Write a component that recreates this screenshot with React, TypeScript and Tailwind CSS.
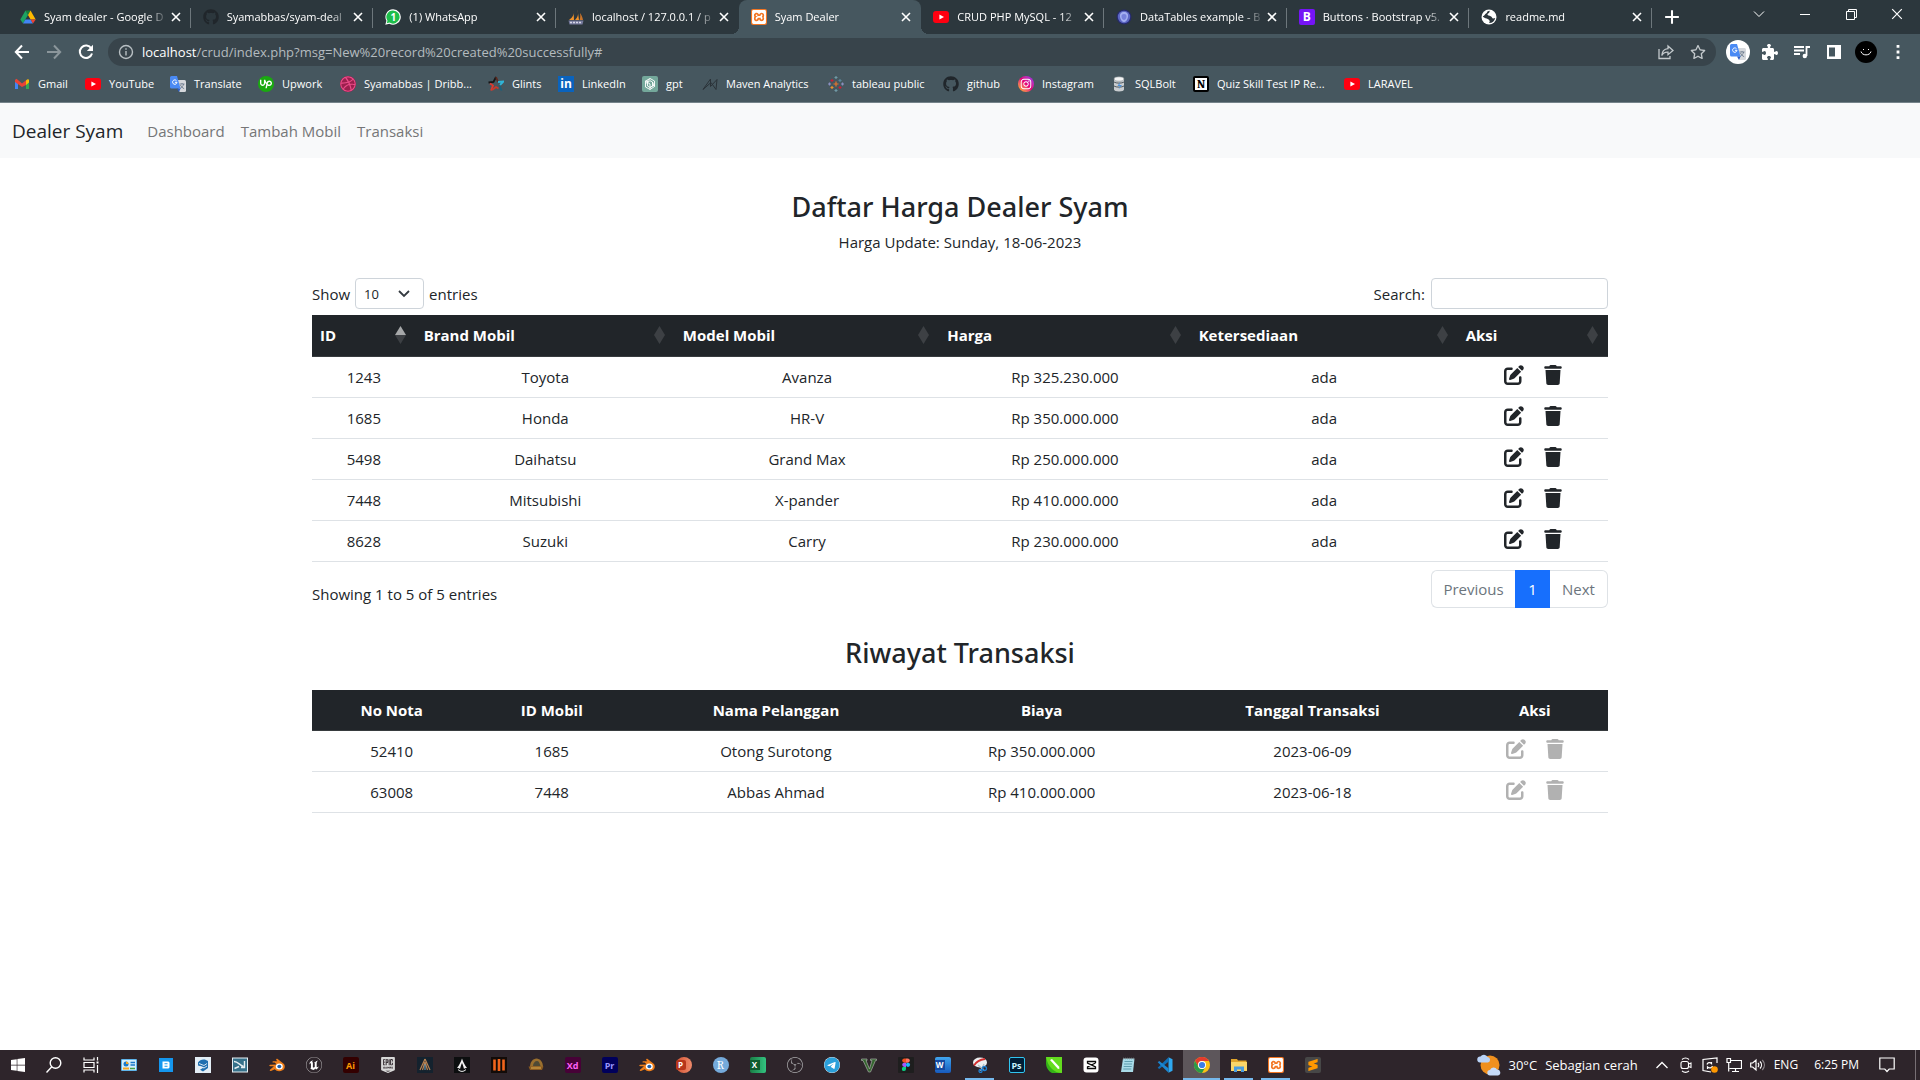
import type { ReactNode } from "react";
import { FaGithub, FaPenToSquare, FaTrash, FaDribbble, FaInstagram, FaWindows, FaTelegram, FaRegStar, FaPuzzlePiece } from "react-icons/fa6";
import { SiUnrealengine, SiEpicgames, SiObsstudio, SiSublimetext, SiXampp, SiUpwork } from "react-icons/si";

/* ---------- shared glyphs ---------- */

function Tile({ className, children }: { className: string; children?: ReactNode }) {
  return <span className={"flex size-4 shrink-0 items-center justify-center leading-none " + className}>{children}</span>;
}

function YouTube() {
  return (
    <svg viewBox="0 0 16 16" className="size-4 shrink-0">
      <rect y="2" width="16" height="12" rx="3" fill="#ff0010" />
      <path d="M6.400 5.400v5.200L11 8z" fill="#fff" />
    </svg>
  );
}

function GDrive() {
  return (
    <svg viewBox="0 0 16 16" className="size-4 shrink-0">
      <path d="M5.500 1.500h5L8 6z" fill="#188038" />
      <path d="M5.500 1.500 8 6 3 14.500.3 10.400z" fill="#1ea362" />
      <path d="M10.500 1.500 15.700 10.400H10.600L8 6z" fill="#ffba00" />
      <path d="M5.400 10.400h5.200L13 14.500H3z" fill="#4285f4" />
      <path d="M10.600 10.400h5.100L13 14.500z" fill="#ea4335" />
    </svg>
  );
}

function WhatsApp() {
  return (
    <span className="relative flex size-4 shrink-0 items-center justify-center">
      <svg viewBox="0 0 16 16" className="absolute size-4">
        <path d="M8 .3a7.700 7.700 0 0 0-6.600 11.500L.3 15.700l4-1A7.700 7.700 0 1 0 8 .3z" fill="#fff" />
        <path d="M8 1.400a6.600 6.600 0 0 0-5.500 10.300l-.8 2.600 2.800-.7A6.600 6.600 0 1 0 8 1.400z" fill="#1ebe4b" />
      </svg>
      <span className="relative text-[10px] leading-none font-bold text-white">1</span>
    </span>
  );
}

function PhpMyAdmin() {
  return (
    <svg viewBox="0 0 16 16" className="size-4 shrink-0">
      <path d="M5.500 1.500C6 5 5.500 8 1 11h5z" fill="#f0932b" />
      <path d="M9.500.5C10.500 4 10.500 8 7 11h4z" fill="#f0932b" />
      <path d="M12 4c.5 3 .3 5-.5 7H15c-.5-3-1.500-5-3-7z" fill="#c9742a" />
      <path d="M.5 11.500h15L14.500 15.500h-13z" fill="#767a9c" />
      <path d="M2 13.500h2m1 0h2m1 0h2m1 0h2" stroke="#d5d7e6" strokeWidth="1.500" />
    </svg>
  );
}

function DataTablesIcon() {
  return (
    <svg viewBox="0 0 16 16" className="size-4 shrink-0">
      <circle cx="8" cy="8" r="7.500" fill="#252a6b" />
      <circle cx="8" cy="8" r="6.200" fill="#5d67c4" />
      <path d="M8 3c3 0 4.500 2 4 5s-2.500 5-4 5-3.500-2-4-5 1-5 4-5z" fill="#a3aef0" />
      <path d="M8 5c1.800 0 2.800 1.200 2.500 3S9 11 8 11 5.800 9.800 5.500 8 6.200 5 8 5z" fill="#7781dc" />
    </svg>
  );
}

function Globe() {
  return (
    <svg viewBox="0 0 16 16" className="size-4 shrink-0">
      <circle cx="8" cy="8" r="7.500" fill="#fff" />
      <path d="M9 1.800c-1 1-.2 2-1.500 2.500S6 6 7.500 6.500s3 .5 3.500 2 1.500 1 3.200.5A6.300 6.300 0 0 1 8 14c.8-1.200 1-1.800.3-2.800S6 9.500 4.500 9.200 2 8 1.800 7c.8-.2 1.500-.3 2-1.300S6 4.500 6 3.500 7.500 2 9 1.800z" fill="#2c363c" />
    </svg>
  );
}

function Translate({ className }: { className: string }) {
  return (
    <svg viewBox="0 0 16 16" className={"shrink-0 " + className}>
      <path d="M6 4h8.500A1.500 1.500 0 0 1 16 5.500v9a1.500 1.500 0 0 1-1.500 1.500H9.500z" fill="#d5d8dc" />
      <path d="M9.500 8h5M12 7v1m1.700 0c-.5 2-2 3.500-3.700 4.500M10.500 9c.5 1.500 2 3 3.700 3.700" stroke="#6b7a8c" strokeWidth=".9" fill="none" />
      <path d="M1.500 0H7l3.500 12.500h-9A1.500 1.500 0 0 1 0 11V1.500A1.500 1.500 0 0 1 1.500 0z" fill="#4a8af4" />
      <path d="M7 12.500h3.500L9 16z" fill="#2a5dc9" />
      <path d="M6.500 4.700A2.200 2.200 0 1 0 7 6.300H4.900" stroke="#fff" strokeWidth="1" fill="none" />
    </svg>
  );
}

function Blender() {
  return (
    <svg viewBox="0 0 16 16" className="size-4 shrink-0">
      <path d="M8.300 1.800 15 7c1.500 2.500.8 5-1.500 6.300-2.500 1.400-6 1.200-7.700-1L2 14c-1.300.3-1.700-.8-.8-1.500L5 9.300H1.200C0 9.200 0 8 1.200 7.700l6.600-.2L5.600 5.600H4.200c-1-.1-1-1.300 0-1.400h4L7.300 3c-.5-.8.2-1.700 1-1.200z" fill="#ef7f1a" />
      <ellipse cx="10.300" cy="9.500" rx="3.500" ry="3" fill="#fff" />
      <ellipse cx="10.300" cy="9.500" rx="2" ry="1.800" fill="#1f5fa8" />
    </svg>
  );
}

function Close({ className }: { className: string }) {
  return (
    <svg viewBox="0 0 10 10" className={className} fill="none" stroke="currentColor">
      <path d="m1 1 8 8M9 1 1 9" />
    </svg>
  );
}

/* ---------- browser tabs ---------- */

type Tab = { title: string; icon: ReactNode; active?: boolean; bare?: boolean };

const tabs: Tab[] = [
  { title: "Syam dealer - Google D", icon: <GDrive /> },
  { title: "Syamabbas/syam-deal", icon: <FaGithub className="size-4 shrink-0 text-[#20262b]" /> },
  { title: "(1) WhatsApp", icon: <WhatsApp /> },
  { title: "localhost / 127.0.0.1 / p", icon: <PhpMyAdmin />, bare: true },
  { title: "Syam Dealer", icon: <Tile className="rounded-xs bg-[#f37623] text-white"><SiXampp className="size-3.5" /></Tile>, active: true, bare: true },
  { title: "CRUD PHP MySQL - 12", icon: <YouTube /> },
  { title: "DataTables example - B", icon: <DataTablesIcon /> },
  { title: "Buttons · Bootstrap v5.", icon: <Tile className="rounded-xs bg-[#7514f6] text-xs font-bold text-white">B</Tile> },
  { title: "readme.md", icon: <Globe /> },
];

function TabStrip() {
  return (
    <div className="flex h-[34px] items-stretch bg-[#2c373d] pl-2">
      <div className="flex w-[1644px] min-w-0">
        {tabs.map((t) => (
          <div
            key={t.title}
            className={
              "relative flex min-w-0 flex-1 items-center pr-[7px] pl-3 text-white " + (t.active ? "rounded-t-lg bg-[#46575f]" : "")
            }
          >
            {t.active && (
              <>
                <span className="absolute bottom-0 -left-2 size-2 bg-[radial-gradient(circle_at_0_0,transparent_8px,#46575f_8px)]" />
                <span className="absolute -right-2 bottom-0 size-2 bg-[radial-gradient(circle_at_100%_0,transparent_8px,#46575f_8px)]" />
              </>
            )}
            {t.icon}
            <span className="ml-2 min-w-0 flex-1 overflow-hidden whitespace-nowrap [mask-image:linear-gradient(to_right,black_calc(100%_-_20px),transparent)]">
              {t.title}
            </span>
            <button type="button" aria-label={"Close " + t.title} className="flex size-4 shrink-0 items-center justify-center">
              <Close className="size-2.5 stroke-[1.600]" />
            </button>
            {!t.bare && <span className="absolute top-2 right-0 h-5 w-px bg-[#6d777c]" />}
          </div>
        ))}
      </div>
      <button type="button" aria-label="New tab" className="ml-3 flex items-center text-white">
        <svg viewBox="0 0 14 14" className="size-4" stroke="currentColor" strokeWidth="1.800">
          <path d="M7 1v12M1 7h12" />
        </svg>
      </button>
      <div className="ml-auto flex items-stretch pb-1.5 text-white">
        <button type="button" aria-label="Search tabs" className="flex w-[46px] items-center justify-center">
          <svg viewBox="0 0 12 12" className="size-3" fill="none" stroke="currentColor"><path d="m1 3.500 5 5 5-5" /></svg>
        </button>
        <button type="button" aria-label="Minimize" className="flex w-[46px] items-center justify-center">
          <svg viewBox="0 0 10 10" className="size-2.5" stroke="currentColor"><path d="M0 5.500h10" /></svg>
        </button>
        <button type="button" aria-label="Restore" className="flex w-[46px] items-center justify-center">
          <svg viewBox="0 0 11 11" className="size-[11px]" fill="none" stroke="currentColor"><path d="M.5 2.500h8v8h-8zM2.500 2.500v-2h8v8h-2" /></svg>
        </button>
        <button type="button" aria-label="Close window" className="flex w-[46px] items-center justify-center">
          <Close className="size-3" />
        </button>
      </div>
    </div>
  );
}

/* ---------- toolbar ---------- */

function Toolbar() {
  return (
    <div className="flex h-9 items-center bg-[#46575f] pr-2.5 pl-3.5 text-white">
      <div className="flex items-center gap-4">
        <button type="button" aria-label="Back">
          <svg viewBox="0 0 16 16" className="size-4" fill="none" stroke="currentColor" strokeWidth="2"><path d="M15 8H2m6-6.500L1.800 8 8 14.500" /></svg>
        </button>
        <button type="button" aria-label="Forward" className="text-[#8b969b]">
          <svg viewBox="0 0 16 16" className="size-4" fill="none" stroke="currentColor" strokeWidth="2"><path d="M1 8h13M8 1.500 14.200 8 8 14.500" /></svg>
        </button>
        <button type="button" aria-label="Reload">
          <svg viewBox="0 0 16 16" className="size-4" fill="none" stroke="currentColor" strokeWidth="2">
            <path d="M13.300 4.500A6.200 6.200 0 1 0 14 9.500" />
            <path d="M15 .8V7H8.800z" fill="currentColor" stroke="none" />
          </svg>
        </button>
      </div>
      <div className="ml-3.5 flex h-7 min-w-0 flex-1 items-center gap-2 rounded-full bg-[#38444b] px-2.5">
        <svg viewBox="0 0 16 16" className="size-4 text-[#b8bfc3]" fill="none" stroke="currentColor" strokeWidth="1.400">
          <circle cx="8" cy="8" r="6.500" />
          <path d="M8 7v4.500M8 4.300v1.500" />
        </svg>
        <p className="min-w-0 flex-1 truncate text-[13px] text-[#b4bbbf]">
          <span className="text-white">localhost</span>/crud/index.php?msg=New%20record%20created%20successfully#
        </p>
        <button type="button" aria-label="Share" className="text-[#c3c9cc]">
          <svg viewBox="0 0 16 16" className="size-4" fill="none" stroke="currentColor" strokeWidth="1.300">
            <path d="M1 5v9.500h11V12" />
            <path d="M10 2l5 4.500-5 4.200V8.200C7 8 5 9 3.800 11.500 4 7.500 6 5 10 4.600z" />
          </svg>
        </button>
        <button type="button" aria-label="Bookmark this page" className="ml-2 text-[#c3c9cc]"><FaRegStar className="size-4" /></button>
      </div>
      <div className="ml-2.5 flex items-center gap-2">
        <button type="button" aria-label="Google Translate" className="flex size-6 items-center justify-center rounded-full bg-white"><Translate className="size-4" /></button>
        <button type="button" aria-label="Extensions" className="flex w-6 justify-center"><FaPuzzlePiece className="size-4" /></button>
        <button type="button" aria-label="Media controls" className="flex w-6 justify-center">
          <svg viewBox="0 0 16 16" className="size-4" fill="none" stroke="currentColor" strokeWidth="1.800">
            <path d="M0 3h10M0 6.500h10M0 10h6" />
            <path d="M16 3h-3.500v9" />
            <circle cx="10.800" cy="12" r="2.200" fill="currentColor" stroke="none" />
          </svg>
        </button>
        <button type="button" aria-label="Side panel" className="flex w-6 justify-center">
          <svg viewBox="0 0 16 16" className="size-4"><path fillRule="evenodd" d="M1 1h14v14H1zM3 3.500v9h6v-9z" fill="currentColor" /></svg>
        </button>
        <button type="button" aria-label="Profile" className="mx-px flex size-[22px] items-center justify-center rounded-full bg-black">
          <svg viewBox="0 0 12 8" className="w-3" fill="none" stroke="currentColor"><path d="M1 3.500c1 4.500 9 4.500 10 0M3.500 1v1M8.500 1v1" /></svg>
        </button>
        <button type="button" aria-label="Menu" className="flex w-6 justify-center">
          <svg viewBox="0 0 4 14" className="h-3.5"><path d="M.6 0h2.800v2.800H.6zM.6 5.600h2.800v2.800H.6zM.6 11.200h2.800V14H.6z" fill="currentColor" /></svg>
        </button>
      </div>
    </div>
  );
}

/* ---------- bookmarks ---------- */

const bookmarks: { label: string; width: string; icon: ReactNode }[] = [
  {
    label: "Gmail",
    width: "w-[71px]",
    icon: (
      <svg viewBox="0 0 16 16" className="size-4 shrink-0">
        <path d="M1 3.500v9.500h3V7z" fill="#4285f4" />
        <path d="M15 3.500v9.500h-3V7z" fill="#34a853" />
        <path d="m1 4 1.500-1.200L8 7.500l5-4L12 9 8 11 1 6z" fill="#ea4335" />
        <path d="M12 4.500 14 3l1 1v2.500L12 9z" fill="#fbbc04" />
      </svg>
    ),
  },
  { label: "YouTube", width: "w-[85px]", icon: <YouTube /> },
  { label: "Translate", width: "w-[88px]", icon: <Translate className="size-4" /> },
  { label: "Upwork", width: "w-[82px]", icon: <Tile className="rounded-full bg-[#1aa910] text-white"><SiUpwork className="size-3" /></Tile> },
  { label: "Syamabbas | Dribb...", width: "w-[148px]", icon: <FaDribbble className="size-4 shrink-0 rounded-full bg-[#9c1f4d] text-[#ea4c89]" /> },
  {
    label: "Glints",
    width: "w-[70px]",
    icon: (
      <svg viewBox="0 0 16 16" className="size-4 shrink-0" fill="none" strokeWidth="1.800">
        <path d="M.5 6.500 5.500 6 8 1" stroke="#161616" />
        <path d="M8 1 10 6" stroke="#5c2a20" />
        <path d="m10 6 5.500-.5L12 9" stroke="#2fb5d8" />
        <path d="m11.500 9.500 2 5" stroke="#17627e" />
        <path d="M2 7.500 5 9.500l-2 5" stroke="#e0392e" />
        <path d="m4 14 4-3 2.500 1.500" stroke="#c93a2b" />
      </svg>
    ),
  },
  { label: "LinkedIn", width: "w-[84px]", icon: <Tile className="bg-[#0a63bd] text-[12px] font-bold text-white">in</Tile> },
  {
    label: "gpt",
    width: "w-[60px]",
    icon: (
      <svg viewBox="0 0 16 16" className="size-4 shrink-0" fill="none" stroke="#fff" strokeWidth=".9">
        <rect width="16" height="16" rx="2" fill="#74a89b" stroke="none" />
        <path d="M8 2.500 12.500 5v5.500L8 13.500 3.500 11V5z" />
        <path d="M8 2.500 5.500 5v5L8 11.500 12.500 9M3.500 5l4.500 3v5.500M12.500 10.500 10.500 6 8 4.700 3.500 7.500M10.500 6v4L8 11.500" />
      </svg>
    ),
  },
  {
    label: "Maven Analytics",
    width: "w-[126px]",
    icon: (
      <svg viewBox="0 0 16 16" className="size-4 shrink-0" fill="none" stroke="#2a3238" strokeWidth="1">
        <path d="M1 13.500 8.500 3v7.500L15 3.500 14 13.500 9 6.500 1 13.500" />
      </svg>
    ),
  },
  {
    label: "tableau public",
    width: "w-[115px]",
    icon: (
      <svg viewBox="0 0 16 16" className="size-4 shrink-0" fill="none" strokeWidth="1.200">
        <path d="M8 5.500v5M5.500 8h5" stroke="#e8762c" />
        <path d="M4 3v3M2.500 4.500h3M12 10v3M10.500 11.500h3" stroke="#c72035" />
        <path d="M12 3v3M10.500 4.500h3" stroke="#59879b" />
        <path d="M4 10v3M2.500 11.500h3" stroke="#eb912c" />
        <path d="M8 0v3M6.500 1.500h3M8 13v3M6.500 14.500h3" stroke="#7099a6" />
        <path d="M1.500 6.500v3M0 8h3M14.500 6.500v3M13 8h3" stroke="#8a8fc0" />
      </svg>
    ),
  },
  { label: "github", width: "w-[75px]", icon: <FaGithub className="size-4 shrink-0 text-[#20262b]" /> },
  { label: "Instagram", width: "w-[93px]", icon: <Tile className="rounded-full bg-linear-to-tr from-amber-400 via-pink-600 to-purple-600 text-white"><FaInstagram className="size-3" /></Tile> },
  {
    label: "SQLBolt",
    width: "w-[82px]",
    icon: (
      <svg viewBox="0 0 16 16" className="size-4 shrink-0">
        <path d="M3 3.500h10v10c0 1-2 2-5 2s-5-1-5-2z" fill="#c9cdd0" />
        <path d="M3 6c2 1.500 8 1.500 10 0M3 10c2 1.500 8 1.500 10 0" stroke="#50585d" fill="none" />
        <ellipse cx="8" cy="3" rx="5" ry="2.200" fill="#f4f5f5" stroke="#7d868b" strokeWidth=".6" />
        <path d="M9 6 6.500 10H9l-1.500 3.500L11 9H8.500z" fill="#4a90d9" />
      </svg>
    ),
  },
  {
    label: "Quiz Skill Test IP Re...",
    width: "w-[151px]",
    icon: <Tile className="rounded-xs border-2 border-black bg-white font-serif text-xs font-bold text-black">N</Tile>,
  },
  { label: "LARAVEL", width: "w-[85px]", icon: <YouTube /> },
];

function Bookmarks() {
  return (
    <nav aria-label="Bookmarks" className="flex h-[33px] items-center border-b border-[#75838a] bg-[#46575f] pb-1 pl-3.5 text-white">
      {bookmarks.map((b) => (
        <a key={b.label} href="#" className={"flex shrink-0 items-center gap-2 whitespace-nowrap " + b.width}>
          {b.icon}
          {b.label}
        </a>
      ))}
    </nav>
  );
}

/* ---------- page ---------- */

function Actions({ muted, name }: { muted?: boolean; name: string }) {
  return (
    <div className={"flex items-center justify-center gap-5 " + (muted ? "text-[#b1b1b1]" : "text-[#212529]")}>
      <a href="#" aria-label={"Edit " + name}><FaPenToSquare className="size-5" /></a>
      <a href="#" aria-label={"Hapus " + name}><FaTrash className="h-5 w-[18px]" /></a>
    </div>
  );
}

function SortMark({ asc }: { asc?: boolean }) {
  return (
    <svg viewBox="0 0 11 18" className="h-[18px] w-[11px] shrink-0">
      <path d="M5.500 0 11 9H0z" fill={asc ? "#a6a8a9" : "#3d4044"} />
      <path d="M0 9h11l-5.500 9z" fill="#3d4044" />
    </svg>
  );
}

const carColumns = [
  { label: "ID", width: "w-[8%]" },
  { label: "Brand Mobil", width: "w-[20%]" },
  { label: "Model Mobil", width: "w-[20.4%]" },
  { label: "Harga", width: "w-[19.4%]" },
  { label: "Ketersediaan", width: "w-[20.6%]" },
  { label: "Aksi", width: "w-[11.6%]" },
];

const cars = [
  ["1243", "Toyota", "Avanza", "Rp 325.230.000", "ada"],
  ["1685", "Honda", "HR-V", "Rp 350.000.000", "ada"],
  ["5498", "Daihatsu", "Grand Max", "Rp 250.000.000", "ada"],
  ["7448", "Mitsubishi", "X-pander", "Rp 410.000.000", "ada"],
  ["8628", "Suzuki", "Carry", "Rp 230.000.000", "ada"],
];

const saleColumns = [
  { label: "No Nota", width: "w-[12.3%]" },
  { label: "ID Mobil", width: "w-[12.4%]" },
  { label: "Nama Pelanggan", width: "w-[22.2%]" },
  { label: "Biaya", width: "w-[18.8%]" },
  { label: "Tanggal Transaksi", width: "w-[23%]" },
  { label: "Aksi", width: "w-[11.3%]" },
];

const sales = [
  ["52410", "1685", "Otong Surotong", "Rp 350.000.000", "2023-06-09"],
  ["63008", "7448", "Abbas Ahmad", "Rp 410.000.000", "2023-06-18"],
];

function Rows({ rows, muted }: { rows: string[][]; muted?: boolean }) {
  return (
    <tbody>
      {rows.map((r) => (
        <tr key={r[0]} className="h-[41px] border-b border-[#dee2e6] text-center">
          {r.map((c, i) => (
            <td key={i}>{c}</td>
          ))}
          <td className="pb-1"><Actions muted={muted} name={r[0]} /></td>
        </tr>
      ))}
    </tbody>
  );
}

function Page() {
  return (
    <div className="flex-1 bg-white text-[15px] leading-6 text-[#212529]">
      <nav className="flex h-[55px] items-center bg-[#f8f9fa] px-3">
        <a href="#" className="mr-6 text-[19px]">Dealer Syam</a>
        <div className="flex gap-4 text-[#757677]">
          <a href="#">Dashboard</a>
          <a href="#">Tambah Mobil</a>
          <a href="#">Transaksi</a>
        </div>
      </nav>

      <main className="mx-auto max-w-[1320px] px-3 pt-8">
        <h1 className="text-center font-['Noto_Sans','Open_Sans',sans-serif] text-[27px] leading-[34px] font-medium">Daftar Harga Dealer Syam</h1>
        <p className="mt-1.5 text-center">Harga Update: Sunday, 18-06-2023</p>

        <div className="mt-6 flex items-center justify-between">
          <label className="flex items-center gap-[5px]">
            Show
            <span className="relative flex">
              <select defaultValue="10" className="h-[31px] w-[69px] appearance-none rounded-sm border border-[#ced4da] bg-white pl-2 text-[13px]">
                <option>10</option>
                <option>25</option>
                <option>50</option>
                <option>100</option>
              </select>
              <svg viewBox="0 0 12 8" className="pointer-events-none absolute top-3 right-3.5 w-3" fill="none" stroke="#343a40" strokeWidth="1.800">
                <path d="m1 1 5 5 5-5" />
              </svg>
            </span>
            entries
          </label>
          <label className="flex items-center gap-1.5">
            Search:
            <input type="search" className="h-[31px] w-[177px] rounded-sm border border-[#ced4da] bg-white px-2" />
          </label>
        </div>

        <table className="mt-1.5 w-full table-fixed border-collapse">
          <thead className="bg-[#212529] text-white">
            <tr className="h-[41px] border-b border-[#373b3e] text-left">
              {carColumns.map((c, i) => (
                <th key={c.label} scope="col" className={"pr-2.5 pl-2 font-bold " + c.width}>
                  <span className="flex items-center justify-between">
                    {c.label}
                    <SortMark asc={i === 0} />
                  </span>
                </th>
              ))}
            </tr>
          </thead>
          <Rows rows={cars} />
        </table>

        <div className="mt-2 flex items-start justify-between">
          <p className="pt-3">Showing 1 to 5 of 5 entries</p>
          <div className="flex h-[38px] text-[#6c757d]">
            <button type="button" className="w-[84px] rounded-l-md border border-r-0 border-[#dee2e6]">Previous</button>
            <button type="button" className="w-[35px] bg-[#176ffd] text-white">1</button>
            <button type="button" className="w-[58px] rounded-r-md border border-l-0 border-[#dee2e6]">Next</button>
          </div>
        </div>

        <h2 className="mt-7 text-center font-['Noto_Sans','Open_Sans',sans-serif] text-[27px] leading-[34px] font-medium">Riwayat Transaksi</h2>

        <table className="mt-5 w-full table-fixed border-collapse">
          <thead className="bg-[#212529] text-white">
            <tr className="h-[41px] border-b border-[#373b3e] text-center">
              {saleColumns.map((c) => (
                <th key={c.label} scope="col" className={"font-bold " + c.width}>{c.label}</th>
              ))}
            </tr>
          </thead>
          <Rows rows={sales} muted />
        </table>
      </main>
    </div>
  );
}

/* ---------- taskbar ---------- */

const apps: { name: string; icon: ReactNode; state?: "open" | "active" }[] = [
  {
    name: "Control Panel",
    icon: (
      <svg viewBox="0 0 16 16" className="size-4">
        <rect y="2" width="16" height="12" rx="1" fill="#5fb4ea" />
        <rect x="1" y="3" width="14" height="10" fill="#d5eefa" />
        <circle cx="5" cy="7" r="2.500" fill="#1b78c8" />
        <path d="M5 7V4.500A2.500 2.500 0 0 1 7.500 7z" fill="#f5a623" />
        <path d="M9.500 5.500H14M9.500 8H14" stroke="#1b78c8" strokeWidth="1.500" />
        <path d="M2 11.500h6" stroke="#f5a623" strokeWidth="2" />
        <path d="M9 11.500h5" stroke="#43a047" strokeWidth="1.500" />
      </svg>
    ),
  },
  {
    name: "BlueStacks",
    icon: (
      <svg viewBox="0 0 16 16" className="size-4">
        <rect x="1" y="1" width="14" height="14" fill="#1496ee" />
        <path fillRule="evenodd" d="M4.500 4.500h6l1 1v5l-1 1h-6zM6.500 6.200v1.100h3V6.200zM6.500 8.700v1.100h3V8.700z" fill="#fff" />
      </svg>
    ),
  },
  {
    name: "SketchUp",
    icon: (
      <svg viewBox="0 0 16 16" className="size-4">
        <rect width="16" height="16" fill="#e3eef6" />
        <path d="M3 5.500C5 2 10 1.500 13 4v7l-5 3.500-3-1.800 4-2.500-6-1.700z" fill="#1f6fb0" />
        <path d="m4 6.500 5 2 3-2M5 9.500l4 1.500 3-2" stroke="#e3eef6" strokeWidth=".9" fill="none" />
      </svg>
    ),
  },
  {
    name: "Layout editor",
    icon: (
      <svg viewBox="0 0 16 16" className="size-4">
        <rect x=".5" y="1" width="15" height="14" fill="#35718a" stroke="#e6eff3" />
        <path d="M2 4.500c4 0 6 4 9.500 5M12.500 4v6.500H9M2.500 11.500 7 9.500" stroke="#e6eff3" strokeWidth="1.400" fill="none" />
      </svg>
    ),
  },
  { name: "Blender", icon: <Blender /> },
  { name: "Unreal Engine", icon: <SiUnrealengine className="size-4 text-white" /> },
  { name: "Illustrator", icon: <Tile className="rounded-xs bg-[#330000] text-[9px] font-bold text-[#ff9a00]">Ai</Tile> },
  { name: "Epic Games", icon: <SiEpicgames className="size-4 text-[#d8d8d8]" /> },
  {
    name: "Assassin's Creed Odyssey",
    icon: (
      <svg viewBox="0 0 16 16" className="size-4" fill="none">
        <rect width="16" height="16" fill="#14222e" />
        <path d="M8 2 3 13M8 2l5 11M8 5l-2.500 8M8 5l2.500 8" stroke="#b98352" strokeWidth="1.200" />
        <path d="M8 7v6" stroke="#6fa7c7" />
      </svg>
    ),
  },
  {
    name: "Assassin's Creed",
    icon: (
      <svg viewBox="0 0 16 16" className="size-4">
        <rect width="16" height="16" fill="#0c0e0f" />
        <path d="M8 1.500c1 3 3 7 5 9.500-1.500 0-2.500.3-3 1C9.500 9.500 8.500 7 8 6c-.5 1-1.500 3.500-2 6-.5-.7-1.500-1-3-1 2-2.500 4-6.500 5-9.500z" fill="#f2f2f2" />
        <path d="M4 12.500c2.500 2.500 5.500 2.500 8 0" stroke="#f2f2f2" fill="none" />
      </svg>
    ),
  },
  {
    name: "Call of Duty",
    icon: (
      <svg viewBox="0 0 16 16" className="size-4">
        <rect width="16" height="16" fill="#120b08" />
        <path d="M3.500 2.500v11M8 2v12M12.500 2.500v11" stroke="#f2641c" strokeWidth="2.600" />
      </svg>
    ),
  },
  {
    name: "Age of Empires",
    icon: (
      <svg viewBox="0 0 16 16" className="size-4">
        <path d="M2 10C2 5 5 1.500 8.500 1.500S15 5 15 10z" fill="#9a6f2e" />
        <path d="M5 9c0-3 2-5 4-5s2.500 2 3.500 5z" fill="#4f4a35" />
        <path d="M.5 9.500h15L14 13H2z" fill="#8b5a20" />
        <path d="M3 11h10" stroke="#e0b050" />
      </svg>
    ),
  },
  { name: "Adobe XD", icon: <Tile className="rounded-xs bg-[#470137] text-[9px] font-bold text-[#ff61f6]">Xd</Tile> },
  { name: "Premiere Pro", icon: <Tile className="rounded-xs bg-[#00005b] text-[9px] font-bold text-[#9999ff]">Pr</Tile> },
  { name: "Blender 3", icon: <Blender /> },
  {
    name: "PowerPoint",
    icon: (
      <Tile className="justify-start rounded-full bg-linear-to-r from-[#d35230] to-[#f08a6b] text-[8px] font-bold text-white">
        <span className="flex size-2.5 items-center justify-center rounded-xs bg-[#b7351a]">P</span>
      </Tile>
    ),
  },
  { name: "RStudio", icon: <Tile className="rounded-full bg-[#75aadb] font-serif text-xs text-white">R</Tile> },
  {
    name: "Excel",
    icon: (
      <Tile className="justify-start rounded-xs bg-linear-to-r from-[#1a7f46] to-[#33c481] text-[8px] font-bold text-white">
        <span className="flex size-2.5 items-center justify-center bg-[#0e5c30]">X</span>
      </Tile>
    ),
  },
  { name: "OBS Studio", icon: <SiObsstudio className="size-4 text-[#a9a9ab]" /> },
  { name: "Telegram", icon: <FaTelegram className="size-4 rounded-full bg-white text-[#2ba0da]" /> },
  {
    name: "GTA V",
    icon: (
      <svg viewBox="0 0 16 16" className="size-4">
        <path d="M.5 2h5.500v1.500H5L8.500 12 11 3.500H9.500V2h6v1.500h-1L9.500 15H7.500L2 3.500H.5z" fill="#35662f" stroke="#9a9f99" strokeWidth=".8" />
      </svg>
    ),
  },
  {
    name: "Figma",
    icon: (
      <svg viewBox="0 0 16 16" className="size-4">
        <rect width="16" height="16" rx="1" fill="#1e1e1e" />
        <path d="M8 1.500H6.300a2.100 2.100 0 0 0 0 4.200H8z" fill="#f24e1e" />
        <path d="M8 1.500h1.700a2.100 2.100 0 0 1 0 4.200H8z" fill="#ff7262" />
        <path d="M8 5.700H6.300a2.100 2.100 0 0 0 0 4.200H8z" fill="#a259ff" />
        <circle cx="10" cy="7.800" r="2.100" fill="#1abcfe" />
        <path d="M8 9.900H6.300A2.100 2.100 0 1 0 8 12z" fill="#0acf83" />
      </svg>
    ),
  },
  {
    name: "Word",
    icon: (
      <Tile className="justify-start rounded-xs bg-linear-to-b from-[#41a5ee] to-[#185abd] text-[8px] font-bold text-white">
        <span className="flex size-2.5 items-center justify-center bg-[#1449a0]">W</span>
      </Tile>
    ),
  },
  {
    name: "Snipping Tool",
    state: "open",
    icon: (
      <svg viewBox="0 0 16 16" className="size-4">
        <ellipse cx="8" cy="5.500" rx="7" ry="5" fill="#eceff1" />
        <path d="M2 8.500C4 5 8 2.500 13 2" stroke="#d22f2f" strokeWidth="1.800" fill="none" />
        <path d="m6 8 6 5M12 7l-3.500 7" stroke="#b0bec5" strokeWidth="1.300" />
        <circle cx="12.500" cy="11.500" r="2" fill="none" stroke="#1f7fd0" strokeWidth="1.300" />
        <circle cx="8.500" cy="14" r="1.500" fill="none" stroke="#1f7fd0" strokeWidth="1.300" />
      </svg>
    ),
  },
  { name: "Photoshop", icon: <Tile className="rounded-xs border border-[#31c5f0] bg-[#001e36] text-[9px] font-bold text-[#c9f3ff]">Ps</Tile> },
  {
    name: "CorelDRAW",
    icon: (
      <svg viewBox="0 0 16 16" className="size-4">
        <path d="M0 0h16v16H6C2 14 0 10 0 6z" fill="#35b318" />
        <path d="M0 0h16v16c-8 0-14-6-16-16z" fill="#63dc1e" />
        <path d="m4 3 8 9 1.500-.5-.5-2L6 2z" fill="#fff" />
      </svg>
    ),
  },
  {
    name: "CapCut",
    icon: (
      <svg viewBox="0 0 16 16" className="size-4">
        <rect x=".5" y=".5" width="15" height="15" rx="3" fill="#fff" />
        <path d="M12.500 6V4.500h-8V6l8 4v1.500h-8V10l8-4" fill="none" stroke="#0a0a0a" strokeWidth="1.300" />
      </svg>
    ),
  },
  {
    name: "Notepad",
    icon: (
      <svg viewBox="0 0 16 16" className="size-4">
        <path d="M3 1.500h11.500L13 15H1z" fill="#a9dbe8" />
        <path d="M4.500 4.500h8M4 7h8M3.700 9.500h8M3.300 12h8" stroke="#4d8ea0" strokeWidth=".8" />
        <path d="M3 1.500h11.500" stroke="#7a8588" strokeWidth="1.500" strokeDasharray="1 1" />
      </svg>
    ),
  },
  {
    name: "Visual Studio Code",
    icon: (
      <svg viewBox="0 0 16 16" className="size-4">
        <path d="m11.500.3 4 1.900v11.600l-4 1.900z" fill="#2fa8f0" />
        <path d="M11.500.3v4.500L2.200 12 .7 10.700z" fill="#0f6fb8" />
        <path d="M11.500 15.700v-4.500L2.200 4 .7 5.300z" fill="#1b86d1" />
      </svg>
    ),
  },
  {
    name: "Google Chrome",
    state: "active",
    icon: (
      <svg viewBox="0 0 16 16" className="size-4">
        <circle cx="8" cy="8" r="8" fill="#fbc116" />
        <path d="M1.070 4A8 8 0 0 1 14.930 4H8a4 4 0 0 0-3.460 6z" fill="#e33b2e" />
        <path d="M1.070 4A8 8 0 0 0 8 16l3.460-6a4 4 0 0 1-6.920 0z" fill="#2a9a48" />
        <circle cx="8" cy="8" r="4" fill="#fff" />
        <circle cx="8" cy="8" r="3.100" fill="#3b7de8" />
      </svg>
    ),
  },
  {
    name: "File Explorer",
    state: "open",
    icon: (
      <svg viewBox="0 0 16 16" className="size-4">
        <path d="M0 2h6l1 1.500h8.500V7H0z" fill="#e2a52b" />
        <path d="M0 5h16v9H0z" fill="#fbd669" />
        <path d="M3 15V9.500h10V15h-3v-2.500H6V15z" fill="#4a9de0" />
      </svg>
    ),
  },
  { name: "XAMPP", state: "open", icon: <Tile className="rounded-xs bg-[#f37623] text-white"><SiXampp className="size-3.5" /></Tile> },
  { name: "Sublime Text", icon: <Tile className="rounded-xs bg-[#474747] text-[#ff9800]"><SiSublimetext className="size-3" /></Tile> },
];

function Taskbar() {
  return (
    <footer className="flex h-[30px] items-stretch bg-[#2e252b] text-white">
      <button type="button" aria-label="Start" className="flex w-9 items-center justify-center"><FaWindows className="size-4" /></button>
      <button type="button" aria-label="Search" className="flex w-9 items-center justify-center">
        <svg viewBox="0 0 16 16" className="size-4" fill="none" stroke="currentColor" strokeWidth="1.400"><circle cx="9.500" cy="6" r="5.300" /><path d="m5.800 9.800-5.300 5.700" /></svg>
      </button>
      <button type="button" aria-label="Task view" className="flex w-[38px] items-center justify-center">
        <svg viewBox="0 0 16 16" className="size-4" fill="none" stroke="currentColor" strokeWidth="1.200">
          <path d="M1 .5v2.500h10V.5M1 5.500h10v5H1zM1 15.500V13h10v2.500M14.500 0v3.500M14.500 8v8" />
          <path d="M13.500 4.500h2v2h-2z" fill="currentColor" stroke="none" />
        </svg>
      </button>
      {apps.map((a) => (
        <button
          key={a.name}
          type="button"
          aria-label={a.name}
          className={"relative flex w-[37px] shrink-0 items-center justify-center " + (a.state === "active" ? "bg-[#5d565b]" : "")}
        >
          {a.icon}
          {a.state && <span className={"absolute bottom-0 h-0.5 bg-[#76b9ed] " + (a.state === "active" ? "inset-x-0" : "inset-x-1")} />}
        </button>
      ))}
      <div className="ml-auto flex items-center">
        <button type="button" className="mr-4 flex items-center gap-2 text-[13px]">
          <svg viewBox="0 0 24 24" className="size-6">
            <circle cx="13" cy="12" r="9.500" fill="#f0901e" />
            <path d="M3 9.500a3 3 0 0 1 .5-6 4 4 0 0 1 7 .5 2.800 2.800 0 0 1 .5 5.500z" fill="#b9d3f7" />
            <path d="M13 22.500a2.700 2.700 0 0 1 0-5.400 3.800 3.800 0 0 1 7-.5 3 3 0 0 1 1 5.900z" fill="#c5dbf9" />
          </svg>
          <span>30°C</span>
          <span>Sebagian cerah</span>
        </button>
        <div className="mr-2 flex items-center gap-2">
          <svg viewBox="0 0 16 16" className="size-4" fill="none" stroke="currentColor" strokeWidth="1.300"><path d="m2.500 11 5.500-5.500 5.500 5.500" /></svg>
          <svg viewBox="0 0 16 16" className="size-4" fill="none" stroke="currentColor" strokeWidth="1.100">
            <rect x="3" y="4.500" width="7.500" height="7" rx="2" />
            <path d="M10.500 7 13 6v4.500l-2.500-1M4 2.500C6 .5 9 .5 11 2.500M4 14c2 1.500 5 1.500 7 0" />
          </svg>
          <svg viewBox="0 0 16 16" className="size-4" fill="none" stroke="currentColor" strokeWidth="1.200">
            <path d="M15 6V1L1 2.500v11L9 15" />
            <path d="M5 7.500c.5-2 3-2.500 4.500-1V5M10.500 9c-.5 2-3.500 2.500-5 1V12" />
            <circle cx="12.500" cy="12.500" r="3.300" fill="#ff9800" stroke="none" />
          </svg>
          <svg viewBox="0 0 16 16" className="size-4" fill="none" stroke="currentColor" strokeWidth="1.200">
            <path d="M5 3.500h10.500v8H3.500M9.500 11.500v3M6 14.500h7M1 1.500h3.500v4H1zM2.700 5.500v9" />
          </svg>
          <svg viewBox="0 0 16 16" className="size-4" fill="none" stroke="currentColor" strokeWidth="1.200">
            <path d="M.7 6v4h2L6 13V3L2.700 6zM8 6c1 1 1 3 0 4M10 4.500c2 2 2 5 0 7" />
            <path d="M12.300 3c2.800 3 2.800 7 0 10" stroke="#8d878b" />
          </svg>
        </div>
        <span className="mr-4 text-xs">ENG</span>
        <span className="mr-5 text-xs">6:25 PM</span>
        <button type="button" aria-label="Notifications" className="mr-5">
          <svg viewBox="0 0 16 16" className="size-4" fill="none" stroke="currentColor" strokeWidth="1.200"><path d="M.8 1h14.400v11h-5L8 14.500 5.800 12h-5z" /></svg>
        </button>
        <span className="mr-1 h-[30px] w-px bg-[#776f74]" />
      </div>
    </footer>
  );
}

export default function App() {
  return (
    <div className="flex min-h-screen flex-col overflow-hidden bg-white font-['Open_Sans','Noto_Sans',sans-serif] text-[11px] leading-4">
      <header>
        <TabStrip />
        <Toolbar />
        <Bookmarks />
      </header>
      <Page />
      <Taskbar />
    </div>
  );
}
